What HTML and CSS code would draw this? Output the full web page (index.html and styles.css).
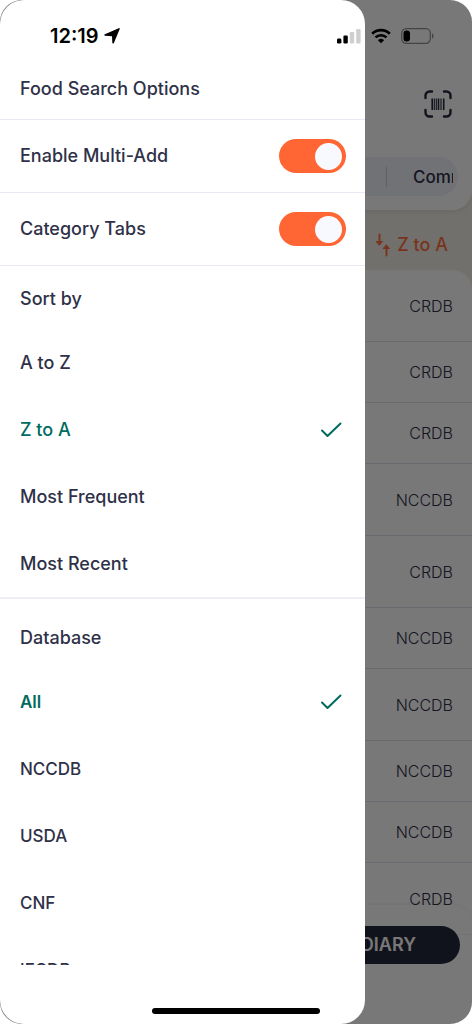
FILE: index.html
```html
<!DOCTYPE html>
<html lang="en">
<head>
<meta charset="utf-8">
<meta name="viewport" content="width=device-width, initial-scale=1">
<title>Food Search Options</title>
<link rel="stylesheet" href="styles.css">
</head>
<body>
<div class="screen">
  <div class="app">
    <header class="app-header">
      <button class="scan" type="button" aria-label="Scan barcode">
        <svg width="28" height="28" viewBox="0 0 28 28" fill="none" stroke="#262a3d" stroke-width="2.4" stroke-linecap="round">
          <path d="M1.500 8V5.500a4 4 0 0 1 4-4H8M20 1.500h2.500a4 4 0 0 1 4 4V8M26.500 20v2.500a4 4 0 0 1-4 4H20M8 26.500H5.500a4 4 0 0 1-4-4V20"/>
          <path d="M8.200 8.500v11.500M14.500 8.500v11.500M19.700 8.500v11.500" stroke-width="1.600" stroke-linecap="butt"/>
          <path d="M10.300 8.500v11.500M12.300 8.500v11.500M17 8.500v11.500" stroke-width="1.100" stroke-linecap="butt"/>
        </svg>
      </button>
      <nav class="tabs"><span class="divider"></span><button class="tab" type="button">Common</button></nav>
    </header>
    <div class="sort-bar">
      <button class="sort" type="button">
        <svg width="16" height="24" viewBox="0 0 16 24" fill="none" stroke="currentColor" stroke-width="2" stroke-linecap="round" stroke-linejoin="round">
          <path d="M4.500 1.500v8M11.500 22.500v-8"/>
          <path d="M1.500 8.500h6l-3 3.500zM8.500 15.500h6l-3-3.500z" fill="currentColor" stroke-width="1"/>
        </svg>
        Z to A
      </button>
    </div>
    <ul class="foods">
      <li class="tall">CRDB</li>
      <li>CRDB</li>
      <li>CRDB</li>
      <li class="tall">NCCDB</li>
      <li class="tall">CRDB</li>
      <li>NCCDB</li>
      <li class="tall">NCCDB</li>
      <li>NCCDB</li>
      <li>NCCDB</li>
      <li class="tall">CRDB</li>
    </ul>
    <footer class="app-footer"><button class="add" type="button">ADD TO DIARY</button></footer>
  </div>
  <div class="scrim"></div>

  <aside class="drawer">
    <h1 class="heading title">Food Search Options</h1>
    <label class="toggle">Enable Multi-Add <input class="switch" type="checkbox" role="switch" checked></label>
    <label class="toggle">Category Tabs <input class="switch" type="checkbox" role="switch" checked></label>
    <section class="group">
      <h2 class="heading">Sort by</h2>
      <label class="option">A to Z <input class="pick" type="radio" name="sort"></label>
      <label class="option">Z to A <input class="pick" type="radio" name="sort" checked>
        <svg class="check" width="22" height="16" viewBox="0 0 22 16"><path d="M2 8.500 7.500 14 20.500 1.500"/></svg></label>
      <label class="option">Most Frequent <input class="pick" type="radio" name="sort"></label>
      <label class="option">Most Recent <input class="pick" type="radio" name="sort"></label>
    </section>
    <section class="group databases">
      <h2 class="heading">Database</h2>
      <label class="option">All <input class="pick" type="radio" name="db" checked>
        <svg class="check" width="22" height="16" viewBox="0 0 22 16"><path d="M2 8.500 7.500 14 20.500 1.500"/></svg></label>
      <label class="option">NCCDB <input class="pick" type="radio" name="db"></label>
      <label class="option">USDA <input class="pick" type="radio" name="db"></label>
      <label class="option">CNF <input class="pick" type="radio" name="db"></label>
      <label class="option">IFCDB <input class="pick" type="radio" name="db"></label>
    </section>
  </aside>

  <div class="status">
    <span class="time">12:19
      <svg width="16" height="16" viewBox="0 0 16 16"><path d="M15.700.900 9.900 15c-.3.800-1.500.7-1.600-.2L8 8.200 1.100 7.800C.1 7.700 0 6.600.9 6.200L14.700.2c.7-.3 1.300.1 1 .7z"/></svg>
    </span>
    <span class="signals">
      <svg width="24" height="16" viewBox="0 0 24 16"><rect x="0" y="10.500" width="4.400" height="5" rx="1.300"/><rect x="6.400" y="7.500" width="4.400" height="8" rx="1.300"/><g fill="#cfcfcf"><rect x="12.800" y="4" width="4.400" height="11.500" rx="1.300"/><rect x="19.200" y="1" width="4.400" height="14.500" rx="1.300"/></g></svg>
      <svg width="20" height="16" viewBox="0 0 20 16" fill="none" stroke="#000" stroke-width="2.600"><path d="M1.200 5.700a12.600 12.600 0 0 1 17.600 0M4.500 9.400a8 8 0 0 1 11 0"/><path d="M6.900 12.200a4.600 4.600 0 0 1 6.200 0L10 15.300z" fill="#000" stroke="none"/></svg>
      <svg width="34" height="16" viewBox="0 0 34 16"><rect x=".7" y=".7" width="28.600" height="14.600" rx="4.600" fill="none" stroke="#444" stroke-width="1.200"/><rect x="2.500" y="2.500" width="6.500" height="11" rx="3"/><path d="M31 5.500c2 .5 2 4.500 0 5z" fill="#444"/></svg>
    </span>
  </div>
  <div class="home"></div>
</div>
</body>
</html>
```
FILE: styles.css
```css
* { box-sizing: border-box; }
body { margin: 0; background: #fff; color: #2f3148; font: 500 17px/24px Inter, "Noto Sans", sans-serif; }
button { border: 0; padding: 0; background: none; color: inherit; font: inherit; }
svg { display: block; flex: none; }

.screen { position: relative; height: 100vh; overflow: hidden; border-radius: 22px; }
.app { display: flex; flex-direction: column; height: 100%; overflow: hidden; background: #f3efe7; }
.app-header { position: relative; z-index: 1; display: flex; flex-direction: column; gap: 39px; padding: 90px 14px 14px; background: #fff; border-radius: 0 0 20px 20px; box-shadow: 0 2px 6px rgba(0, 0, 0, .08); }
.scan { align-self: flex-end; margin-right: 6px; }
.tabs { display: flex; justify-content: flex-end; align-items: center; gap: 26px; height: 39px; padding-right: 5px; border-radius: 20px; background: #f1f3fb; }
.divider { width: 1px; height: 20px; background: #c9cbd6; }
.tab { width: 40px; overflow: hidden; text-align: left; white-space: nowrap; }
.sort-bar { display: flex; justify-content: flex-end; align-items: center; height: 60px; padding: 10px 24px 0; color: #ff7040; font-size: 18px; }
.sort { display: flex; align-items: center; gap: 6px; }

.foods { flex: 1; min-height: 0; margin: 0; padding: 0; overflow: hidden; list-style: none; background: #fff; border-radius: 20px 20px 0 0; font-weight: 300; font-size: 16px; }
.foods li { display: flex; align-items: center; justify-content: flex-end; height: 61px; padding: 0 19px; border-bottom: 1px solid #dfe0ee; }
.foods .tall { height: 72px; }
.app-footer { position: absolute; inset: auto 0 0; height: 119px; padding: 21px 12px; background: rgba(255, 255, 255, .6); border-radius: 20px 20px 0 0; box-shadow: 0 -1px 4px rgba(0, 0, 0, .06); }
.add { display: block; width: 100%; height: 38px; padding-right: 44px; border-radius: 19px; background: #262a3d; color: #fff; font-size: 18px; font-weight: 600; text-align: right; }
.scrim { position: absolute; inset: 0; z-index: 2; background: rgba(0, 0, 0, .53); }

.drawer { position: absolute; z-index: 3; inset: 0 auto 0 0; display: flex; flex-direction: column; width: 77.4%; padding: 59px 0; background: #fff; border-radius: 24px; font-size: 18px; }
.heading { display: flex; align-items: center; margin: 0; height: 60px; padding: 0 20px; font-size: inherit; font-weight: 500; }
.title { height: 61px; border-bottom: 1px solid #e9e9f3; }
.toggle { display: flex; align-items: center; justify-content: space-between; height: 73px; padding: 0 19px 0 20px; border-bottom: 1px solid #e9e9f3; }
.switch { appearance: none; display: flex; align-items: center; justify-content: flex-end; width: 67px; height: 34px; margin: 0; padding: 4px; border-radius: 17px; background: #d5d6df; }
.switch::before { content: ""; width: 27px; height: 27px; border-radius: 50%; background: #f8f9fe; }
.switch:checked { background: #ff6633; }
.group { padding-top: 3px; }
.databases { flex: 1; min-height: 0; padding-top: 9px; overflow: hidden; border-top: 2px solid #eeeef6; }
.option { display: flex; align-items: center; justify-content: space-between; height: 67px; padding: 0 23px 0 20px; }
.databases .option { font-size: 17px; }
.pick { appearance: none; width: 0; height: 0; margin: 0; }
.option:has(:checked) { color: #006b5f; }
.databases .option:has(:checked) { font-weight: 600; }
.check { fill: none; stroke: #006b5f; stroke-width: 2; stroke-linecap: round; stroke-linejoin: round; }

.status { position: absolute; z-index: 4; inset: 0 0 auto; display: flex; justify-content: space-between; padding: 24px 37px 0 50px; color: #000; font-size: 20px; font-weight: 600; }
.time, .signals { display: flex; align-items: center; gap: 5px; height: 24px; }
.signals { gap: 10px; }
.home { position: absolute; z-index: 4; inset: auto 0 10px; width: 168px; height: 6px; margin: 0 auto; border-radius: 3px; background: #000; }
```
